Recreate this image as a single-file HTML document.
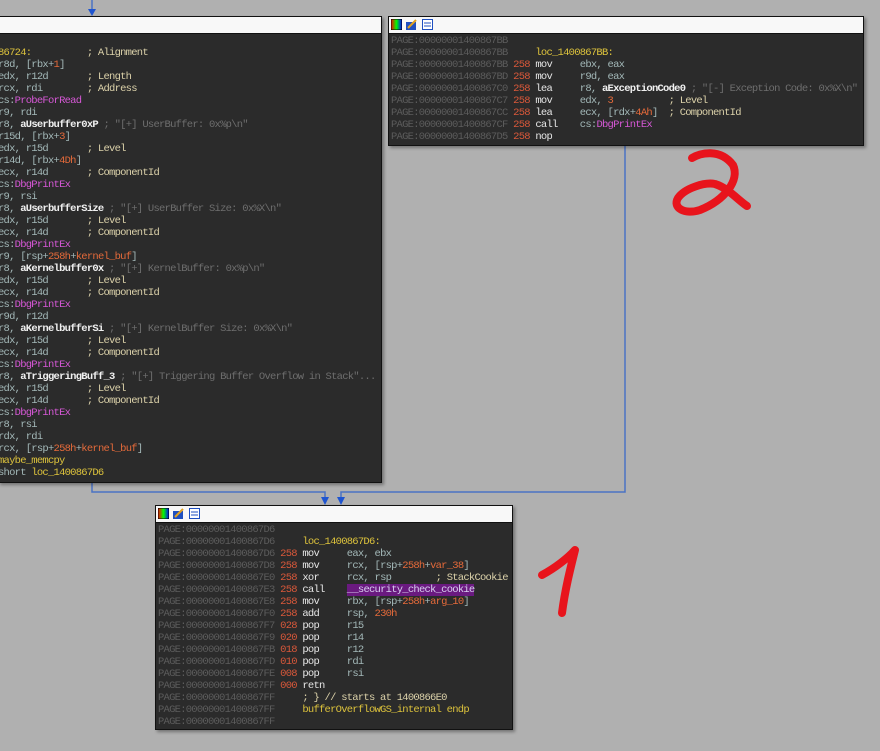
<!DOCTYPE html>
<html><head><meta charset="utf-8"><style>
body{margin:0;width:880px;height:751px;background:#b0b0b0;position:relative;overflow:hidden;font-family:"Liberation Mono",monospace}
.p{position:absolute;background:#2b2b2b;border:1px solid #111;box-shadow:2px 2px 3px rgba(0,0,0,.35)}
.h{height:16px;background:#f8f8f8;border-bottom:1px solid #111;position:relative}
pre{margin:0;font-family:"Liberation Mono",monospace;font-size:10.5px;letter-spacing:-0.75px;line-height:12px;color:#a3b8b8;white-space:pre;position:absolute}
.a{color:#5c5c5c}.s{color:#d8583a}.m{color:#e6e6e6}.y{color:#dcc23c}.k{color:#d658d6}.o{color:#e46a3a}
.w{color:#f0f0f0;font-weight:bold}.g{color:#6e6e6e}.c{color:#dcd2aa}.r{color:#a3b8b8}
.sel{background:#6a1a80;color:#d8d0f0}
.ic{position:absolute;top:2px;width:11px;height:11px}
</style></head><body>
<svg style="position:absolute;left:0;top:0" width="880" height="751">
<g stroke="#4a72c4" stroke-width="1.5" fill="none">
<line x1="92" y1="0" x2="92" y2="10"/>
<polyline points="92,481 92,492 325,492 325,500"/>
<polyline points="625,145 625,492 341,492 341,500"/>
</g>
<g fill="#1f55d0">
<polygon points="88,9 96,9 92,16"/>
<polygon points="321,497 329,497 325,505"/>
<polygon points="337,497 345,497 341,505"/>
</g>
<g stroke="#e8141c" stroke-width="8" fill="none" stroke-linecap="round" stroke-linejoin="round">
<path d="M692,158 C700,153 720,148 733,165 C740,180 725,200 700,210 C685,215 672,208 678,198 C685,188 705,182 715,184 C728,188 738,200 747,206"/>
<path d="M542,575 C555,568 568,558 575,550 C570,570 565,590 562,613"/>
</g>
</svg>

<div class="p" style="left:-2px;top:16px;width:382px;height:465px">
<div class="h"></div>
<pre style="left:-1px;top:30px"><span class="y">86724:</span>          <span class="c">; Alignment</span>
r8d, [rbx+<span class="o">1</span>]
edx, r12d       <span class="c">; Length</span>
rcx, rdi        <span class="c">; Address</span>
<span class="r">cs:</span><span class="k">ProbeForRead</span>
r9, rdi
r8, <span class="w">aUserbuffer0xP</span> <span class="g">; "[+] UserBuffer: 0x%p\n"</span>
r15d, [rbx+<span class="o">3</span>]
edx, r15d       <span class="c">; Level</span>
r14d, [rbx+<span class="o">4Dh</span>]
ecx, r14d       <span class="c">; ComponentId</span>
cs:<span class="k">DbgPrintEx</span>
r9, rsi
r8, <span class="w">aUserbufferSize</span> <span class="g">; "[+] UserBuffer Size: 0x%X\n"</span>
edx, r15d       <span class="c">; Level</span>
ecx, r14d       <span class="c">; ComponentId</span>
cs:<span class="k">DbgPrintEx</span>
r9, [rsp+<span class="o">258h</span>+<span class="o">kernel_buf</span>]
r8, <span class="w">aKernelbuffer0x</span> <span class="g">; "[+] KernelBuffer: 0x%p\n"</span>
edx, r15d       <span class="c">; Level</span>
ecx, r14d       <span class="c">; ComponentId</span>
cs:<span class="k">DbgPrintEx</span>
r9d, r12d
r8, <span class="w">aKernelbufferSi</span> <span class="g">; "[+] KernelBuffer Size: 0x%X\n"</span>
edx, r15d       <span class="c">; Level</span>
ecx, r14d       <span class="c">; ComponentId</span>
cs:<span class="k">DbgPrintEx</span>
r8, <span class="w">aTriggeringBuff_3</span> <span class="g">; "[+] Triggering Buffer Overflow in Stack"...</span>
edx, r15d       <span class="c">; Level</span>
ecx, r14d       <span class="c">; ComponentId</span>
cs:<span class="k">DbgPrintEx</span>
r8, rsi
rdx, rdi
rcx, [rsp+<span class="o">258h</span>+<span class="o">kernel_buf</span>]
<span class="y">maybe_memcpy</span>
short <span class="y">loc_1400867D6</span></pre>
</div>

<div class="p" style="left:388px;top:16px;width:474px;height:128px">
<div class="h">
<svg class="ic" style="left:2px"><defs><linearGradient id="gr" x1="0" x2="1"><stop offset="0" stop-color="#f00"/><stop offset=".5" stop-color="#0f0"/><stop offset="1" stop-color="#00f"/></linearGradient></defs><rect width="11" height="11" fill="url(#gr)" stroke="#000"/></svg>
<svg class="ic" style="left:17px"><rect x="0" y="3" width="10" height="8" fill="#2050c0"/><path d="M2 9 L10 1" stroke="#e0a020" stroke-width="2"/></svg>
<svg class="ic" style="left:33px"><rect x=".5" y=".5" width="10" height="10" fill="#fff" stroke="#2050c0"/><path d="M2 4h7M2 7h7" stroke="#2050c0"/></svg>
</div>
<pre style="left:2px;top:18px"><span class="a">PAGE:00000001400867BB</span>
<span class="a">PAGE:00000001400867BB</span>     <span class="y">loc_1400867BB:</span>
<span class="a">PAGE:00000001400867BB</span> <span class="s">258</span> <span class="m">mov</span>     ebx, eax
<span class="a">PAGE:00000001400867BD</span> <span class="s">258</span> <span class="m">mov</span>     r9d, eax
<span class="a">PAGE:00000001400867C0</span> <span class="s">258</span> <span class="m">lea</span>     r8, <span class="w">aExceptionCode0</span> <span class="g">; "[-] Exception Code: 0x%X\n"</span>
<span class="a">PAGE:00000001400867C7</span> <span class="s">258</span> <span class="m">mov</span>     edx, <span class="o">3</span>          <span class="c">; Level</span>
<span class="a">PAGE:00000001400867CC</span> <span class="s">258</span> <span class="m">lea</span>     ecx, [rdx+<span class="o">4Ah</span>]  <span class="c">; ComponentId</span>
<span class="a">PAGE:00000001400867CF</span> <span class="s">258</span> <span class="m">call</span>    cs:<span class="k">DbgPrintEx</span>
<span class="a">PAGE:00000001400867D5</span> <span class="s">258</span> <span class="m">nop</span></pre>
</div>

<div class="p" style="left:155px;top:505px;width:356px;height:223px">
<div class="h">
<svg class="ic" style="left:2px"><rect width="11" height="11" fill="url(#gr)" stroke="#000"/></svg>
<svg class="ic" style="left:17px"><rect x="0" y="3" width="10" height="8" fill="#2050c0"/><path d="M2 9 L10 1" stroke="#e0a020" stroke-width="2"/></svg>
<svg class="ic" style="left:33px"><rect x=".5" y=".5" width="10" height="10" fill="#fff" stroke="#2050c0"/><path d="M2 4h7M2 7h7" stroke="#2050c0"/></svg>
</div>
<pre style="left:2px;top:18px"><span class="a">PAGE:00000001400867D6</span>
<span class="a">PAGE:00000001400867D6</span>     <span class="y">loc_1400867D6:</span>
<span class="a">PAGE:00000001400867D6</span> <span class="s">258</span> <span class="m">mov</span>     eax, ebx
<span class="a">PAGE:00000001400867D8</span> <span class="s">258</span> <span class="m">mov</span>     rcx, [rsp+<span class="o">258h</span>+<span class="o">var_38</span>]
<span class="a">PAGE:00000001400867E0</span> <span class="s">258</span> <span class="m">xor</span>     rcx, rsp        <span class="c">; StackCookie</span>
<span class="a">PAGE:00000001400867E3</span> <span class="s">258</span> <span class="m">call</span>    <span class="sel">__security_check_cookie</span>
<span class="a">PAGE:00000001400867E8</span> <span class="s">258</span> <span class="m">mov</span>     rbx, [rsp+<span class="o">258h</span>+<span class="o">arg_10</span>]
<span class="a">PAGE:00000001400867F0</span> <span class="s">258</span> <span class="m">add</span>     rsp, <span class="o">230h</span>
<span class="a">PAGE:00000001400867F7</span> <span class="s">028</span> <span class="m">pop</span>     r15
<span class="a">PAGE:00000001400867F9</span> <span class="s">020</span> <span class="m">pop</span>     r14
<span class="a">PAGE:00000001400867FB</span> <span class="s">018</span> <span class="m">pop</span>     r12
<span class="a">PAGE:00000001400867FD</span> <span class="s">010</span> <span class="m">pop</span>     rdi
<span class="a">PAGE:00000001400867FE</span> <span class="s">008</span> <span class="m">pop</span>     rsi
<span class="a">PAGE:00000001400867FF</span> <span class="s">000</span> <span class="m">retn</span>
<span class="a">PAGE:00000001400867FF</span>     <span class="c">; } // starts at 1400866E0</span>
<span class="a">PAGE:00000001400867FF</span>     <span class="y">bufferOverflowGS_internal endp</span>
<span class="a">PAGE:00000001400867FF</span></pre>
</div>
</body></html>
